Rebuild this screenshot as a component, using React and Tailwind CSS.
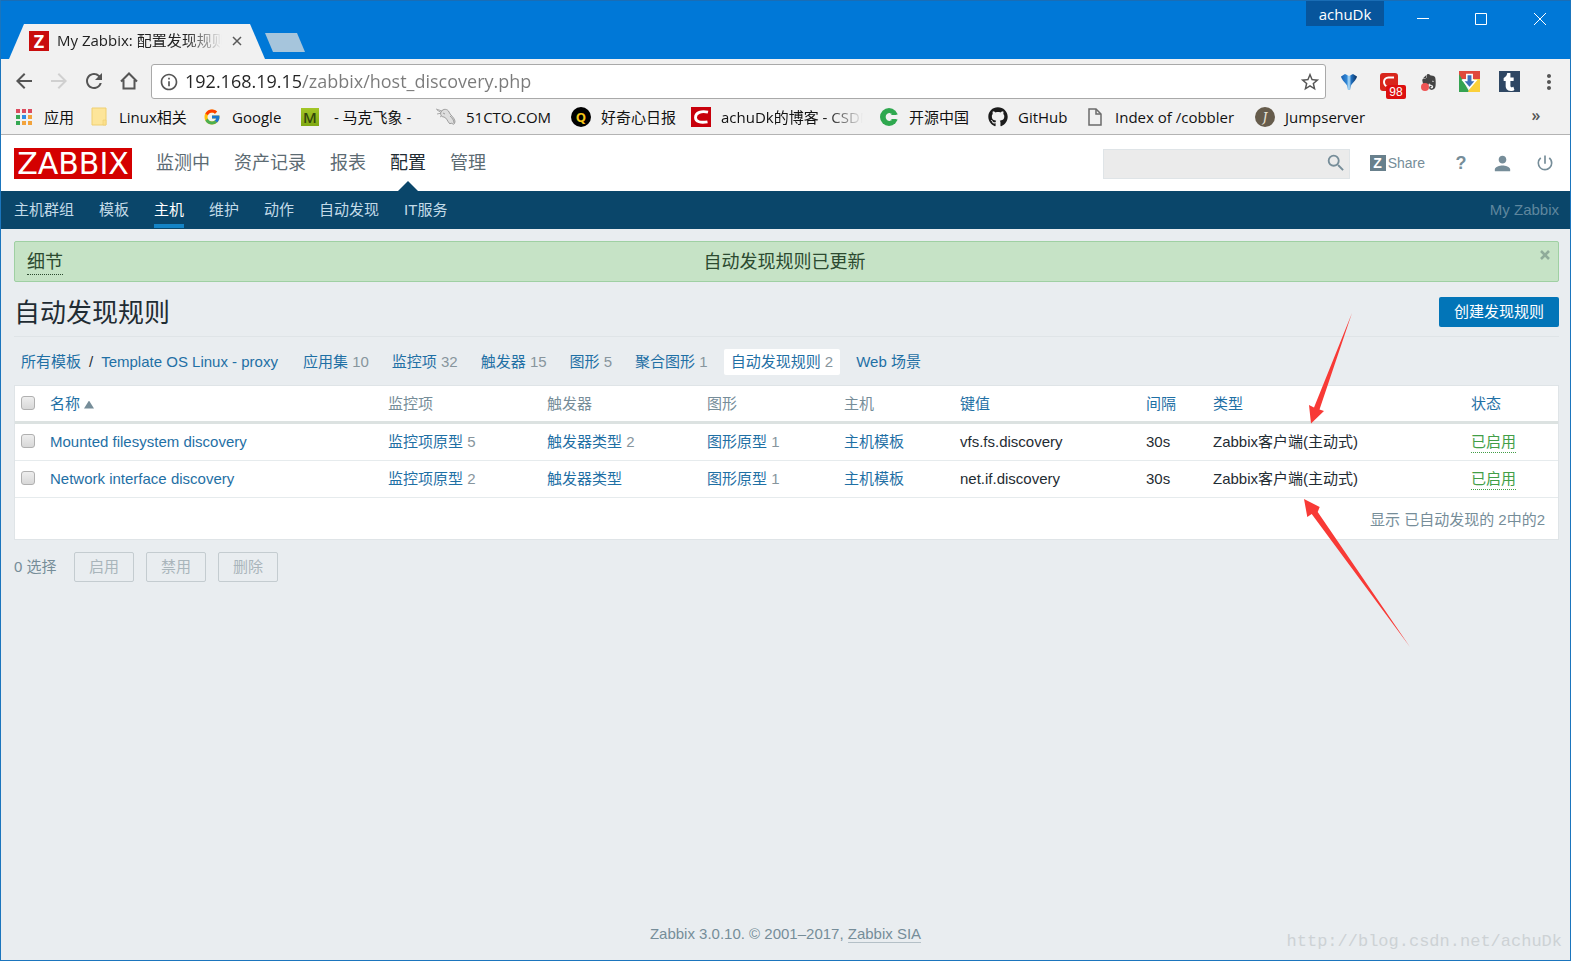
import React from 'react'
import { FaGithub, FaEvernote, FaTumblr } from 'react-icons/fa'
import { FcGoogle } from 'react-icons/fc'
import { MdArrowBack, MdArrowForward, MdRefresh, MdInfoOutline, MdStarBorder, MdMoreVert, MdSearch, MdPerson, MdPowerSettingsNew } from 'react-icons/md'

const appColors = ['#dc4b5e', '#dc4b5e', '#dc4b5e', '#35a853', '#2f8de4', '#f2a33c', '#35a853', '#f2a33c', '#f2a33c']

function AppsIcon() {
  return (
    <svg viewBox="0 0 18 18" className="w-[18px] h-[18px]">
      {appColors.map((fill, i) => (
        <rect key={i} x={1 + (i % 3) * 6} y={1 + Math.floor(i / 3) * 6} width="4" height="4" fill={fill} />
      ))}
    </svg>
  )
}

function FolderIcon() {
  return (
    <svg viewBox="0 0 20 20" className="w-5 h-5">
      <path d="M3 1h14v17H3z" fill="#fde59a" stroke="#efcf70" strokeWidth="1" />
      <path d="M14 13h3v5h-3z" fill="#fbe08c" stroke="#efcf70" strokeWidth=".6" />
    </svg>
  )
}

function SquidIcon() {
  return (
    <svg viewBox="0 0 20 20" className="w-5 h-5">
      <path d="M0 2l6 2M1 7l5-1M4 10l3-2M1 3l5 3" stroke="#aaa" strokeWidth="1" fill="none" />
      <path d="M5 5c2-4 7-3 8 0 1 3 5 5 6 9 0 2-1 4-2 3l-2-1-1 1c-3-3-3-6-6-7-3 0-4-3-3-5z" fill="#dedede" stroke="#8c8c8c" strokeWidth=".8" />
      <path d="M14 9c2 2 4 4 4 7M7 6l2 1" stroke="#8c8c8c" strokeWidth=".8" fill="none" />
    </svg>
  )
}

function PageIcon() {
  return (
    <svg viewBox="0 0 20 20" className="w-5 h-5" fill="none" stroke="#6b6b6b" strokeWidth="1.500">
      <path d="M4 2h7l5 5v11H4z" />
      <path d="M11 2v5h5" />
    </svg>
  )
}

function ChinaIcon() {
  return (
    <svg viewBox="0 0 20 20" className="w-5 h-5">
      <circle cx="10" cy="10" r="9" fill="#2fa84f" />
      <path d="M20 7.500h-6.200a4 4 0 1 0 0 5H20z" fill="#f1f1f1" />
      <path d="M11 6.500h5.500l1.500 1.500h-5zM11 13.500h5.500l1.500-1.500h-5z" fill="#2fa84f" />
    </svg>
  )
}

function CsdnIcon() {
  return (
    <svg viewBox="0 0 20 20" className="w-5 h-5">
      <rect width="20" height="20" fill="#c8000b" />
      <path d="M17 5.200C10.500 3.600 4.500 5.500 4.500 10.500c0 4.300 5 5.500 12 4.300" fill="none" stroke="#fff" strokeWidth="2.800" />
    </svg>
  )
}

const bookmarks = [
  { label: '应用', icon: <AppsIcon />, width: 'w-[75px]' },
  { label: 'Linux相关', icon: <FolderIcon />, width: 'w-[113px]' },
  { label: 'Google', icon: <FcGoogle className="w-[18px] h-[18px]" />, width: 'w-[98px]' },
  { label: '\u00a0- 马克飞象 -', icon: <span className="w-[18px] h-[18px] bg-linear-to-b from-[#a3c626] to-[#7fa812] text-[#33470a] font-semibold text-[15px] leading-[18px] text-center">M</span>, width: 'w-[136px]' },
  { label: '51CTO.COM', icon: <SquidIcon />, width: 'w-[135px]' },
  { label: '好奇心日报', icon: <span className="w-5 h-5 rounded-full bg-black text-[#f4c518] font-bold text-[13px] leading-5 text-center">Q</span>, width: 'w-[120px]' },
  { label: 'achuDk的博客 - CSDN', icon: <CsdnIcon />, width: 'w-[188px]', faded: true },
  { label: '开源中国', icon: <ChinaIcon />, width: 'w-[109px]' },
  { label: 'GitHub', icon: <FaGithub className="w-5 h-5 text-[#1b1b1b]" />, width: 'w-[97px]' },
  { label: 'Index of /cobbler', icon: <PageIcon />, width: 'w-[170px]' },
  { label: 'Jumpserver', icon: <span className="w-5 h-5 rounded-full bg-[#665c4c] text-[#e8e2d4] italic font-serif text-[15px] leading-5 text-center">J</span>, width: 'w-[120px]' },
]

function TitleBar() {
  return (
    <header className="h-[59px] flex items-end bg-[#0078d7] border-t border-[#1a6db5]">
      <div className="ml-2 w-64 h-[35px] pl-5 pb-[2px] flex items-center bg-[#f1f1f1] [clip-path:polygon(0_100%,15px_0,calc(100%-15px)_0,100%_100%)]">
        <span className="w-5 h-5 shrink-0 bg-[#c90d0d] text-white font-bold text-lg leading-5 text-center">Z</span>
        <span className="ml-2 w-[165px] overflow-hidden whitespace-nowrap text-[15px] text-[#222] [mask-image:linear-gradient(to_right,black_78%,transparent)]">My Zabbix: 配置发现规则</span>
        <button aria-label="关闭标签页" className="ml-[7px] w-4 h-4 flex items-center justify-center">
          <svg viewBox="0 0 10 10" className="w-[10px] h-[10px]" stroke="#5a5a5a" strokeWidth="1.500"><path d="M1 1l8 8M9 1l-8 8" /></svg>
        </button>
      </div>
      <button aria-label="新标签页" className="mb-[7px] w-10 h-[19px] bg-[#a6c5dc] [clip-path:polygon(0_0,32px_0,100%_100%,8px_100%)]" />
      <div className="ml-auto self-start flex items-start">
        <span className="w-[78px] h-[25px] bg-[#07559c] text-white text-[15px] leading-[26px] text-center">achuDk</span>
        <div className="ml-[10px] flex h-9 items-center text-white">
          <button aria-label="最小化" className="w-[58px] flex justify-center">
            <svg viewBox="0 0 12 12" className="w-3 h-3" stroke="currentColor"><path d="M0 5.500h12" /></svg>
          </button>
          <button aria-label="最大化" className="w-[58px] flex justify-center">
            <svg viewBox="0 0 12 12" className="w-3 h-3" stroke="currentColor" fill="none"><path d="M.5.500h11v11H.5z" /></svg>
          </button>
          <button aria-label="关闭" className="w-[60px] flex justify-center">
            <svg viewBox="0 0 12 12" className="w-3 h-3" stroke="currentColor"><path d="M0 0l12 12M12 0L0 12" /></svg>
          </button>
        </div>
      </div>
    </header>
  )
}

function Toolbar() {
  return (
    <div className="h-[41px] pt-1 pl-[11px] pr-[1px] flex items-center text-[#555]">
      <div className="w-[139px] pb-[2px] flex gap-[11px]">
        <button aria-label="后退"><MdArrowBack className="w-6 h-6" /></button>
        <button aria-label="前进" className="text-[#d0d0d0]"><MdArrowForward className="w-6 h-6" /></button>
        <button aria-label="重新加载"><MdRefresh className="w-6 h-6" /></button>
        <button aria-label="主页">
          <svg viewBox="0 0 24 24" className="w-6 h-6" fill="none" stroke="currentColor" strokeWidth="2"><path d="M4 12.500L12 4.500l8 8M6.500 11v8.500h11V11" /></svg>
        </button>
      </div>
      <div className="flex-1 h-[35px] pl-[7px] pr-1 flex items-center gap-[6px] bg-white border border-[#a9a9a9] rounded-[3px]">
        <MdInfoOutline className="w-5 h-5" />
        <input
          aria-label="地址"
          defaultValue="192.168.19.15/zabbix/host_discovery.php"
          className="flex-1 min-w-0 h-7 pb-[2px] outline-none text-lg text-transparent bg-clip-text bg-[linear-gradient(to_right,#222_117px,#7a7a7a_117px)]"
        />
        <button aria-label="收藏"><MdStarBorder className="w-[22px] h-[22px]" /></button>
      </div>
      <div className="ml-[3px] flex items-center">
        <button aria-label="扩展一" className="w-10 flex justify-center">
          <svg viewBox="0 0 20 20" className="w-5 h-5">
            <defs>
              <linearGradient id="fan" x1="0" y1="0" x2="1" y2="0">
                <stop offset="0" stopColor="#1b5fae" /><stop offset=".35" stopColor="#2f86d6" /><stop offset=".5" stopColor="#b4e0fa" /><stop offset=".65" stopColor="#1f6fbe" /><stop offset="1" stopColor="#0b2f5c" />
              </linearGradient>
            </defs>
            <path d="M2 4.500L6 2l4 2 4-2 4 2.500c-1 4-4 5.500-6 9L11 18H9l-1-4.500C6 10 3 8.500 2 4.500z" fill="url(#fan)" />
          </svg>
        </button>
        <button aria-label="扩展二" className="relative w-10 flex justify-center">
          <svg viewBox="0 0 20 20" className="w-5 h-5"><rect x="1" y="1" width="18" height="18" rx="3" fill="#d8261c" /><path d="M15 5.500H9.500a4 4 0 0 0 0 9H15" stroke="#fff" strokeWidth="2" fill="none" /></svg>
          <span className="absolute left-[17px] top-[13px] w-5 h-[14px] rounded-[2px] bg-[#dd1010] text-white text-xs leading-[14px] text-center font-['Liberation_Sans',sans-serif]">98</span>
        </button>
        <button aria-label="扩展三" className="relative w-10 flex justify-center">
          <FaEvernote className="w-[18px] h-[18px] text-[#444]" />
          <span className="absolute left-3 bottom-0 w-2 h-2 rounded-full bg-[#ee5555]" />
        </button>
        <button aria-label="扩展四" className="w-10 flex justify-center">
          <svg viewBox="0 0 21 21" className="w-[21px] h-[21px]">
            <path d="M0 0h21v8H0z" fill="#e0493c" /><path d="M0 3l10.500 18H0z" fill="#35a352" /><path d="M21 8v13H9l6-13z" fill="#fbd03a" />
            <path d="M7.800 3.500h5.400v6H17l-6.500 7.500L4 9.500h3.800z" fill="#3c6fb8" stroke="#fff" strokeWidth="1.500" />
          </svg>
        </button>
        <button aria-label="扩展五" className="w-10 flex justify-center">
          <span className="w-[21px] h-[21px] flex items-center justify-center bg-[#2f4763] text-white"><FaTumblr className="w-[18px] h-[18px]" /></span>
        </button>
        <button aria-label="菜单" className="w-10 flex justify-center"><MdMoreVert className="w-6 h-6" /></button>
      </div>
    </div>
  )
}

function Bookmarks() {
  return (
    <nav className="h-[35px] pl-[13px] pr-6 flex items-center border-b border-[#b3b3b3] text-[15px] text-[#111]">
      {bookmarks.map(({ label, icon, width, faded }) => (
        <a key={label} href="#" className={`${width} shrink-0 flex items-center gap-[10px] whitespace-nowrap`}>
          <span className="w-5 shrink-0 flex justify-center">{icon}</span>
          {faded
            ? <span className="w-[142px] overflow-hidden [mask-image:linear-gradient(to_right,black_75%,transparent)]">{label}</span>
            : <span>{label}</span>}
        </a>
      ))}
      <button aria-label="更多书签" className="ml-auto w-5 pb-1 font-semibold text-base leading-5 text-[#555]">»</button>
    </nav>
  )
}

const mainMenu = ['监测中', '资产记录', '报表', '配置', '管理']
const subMenu = ['主机群组', '模板', '主机', '维护', '动作', '自动发现', 'IT服务']

function ZabbixHeader() {
  return (
    <header>
      <div className="h-14 pl-[13px] pr-[15px] flex items-center bg-white text-[#768d99]">
        <a href="#" className="w-[118px] h-[31px] bg-[#d40000] text-white text-center text-[30px] leading-[31px] font-['DejaVu_Sans',sans-serif]">ZABBIX</a>
        <nav className="ml-6 h-14 flex gap-6 text-lg leading-[56px] text-[#5c6b73]">
          {mainMenu.map(item => (
            <a key={item} href="#" className={item === '配置' ? 'relative text-[#1f2c33]' : ''}>
              {item}
              {item === '配置' && <span className="absolute bottom-0 left-2 w-5 h-[10px] bg-[#0a466a] [clip-path:polygon(50%_0,100%_100%,0_100%)]" />}
            </a>
          ))}
        </nav>
        <form className="ml-auto mt-[2px] w-[247px] h-[30px] pr-[2px] flex items-center bg-[#ebebeb] border border-[#dfe4e7]" onSubmit={e => e.preventDefault()}>
          <input type="text" aria-label="搜索" className="flex-1 min-w-0 px-2 outline-none bg-transparent" />
          <button aria-label="搜索" className="pb-[2px]"><MdSearch className="w-[22px] h-[22px]" /></button>
        </form>
        <a href="#" className="ml-5 flex items-center gap-[2px] text-sm">
          <span className="w-4 h-4 bg-[#68808c] text-white font-bold text-sm leading-4 text-center">Z</span>
          Share
        </a>
        <a href="#" aria-label="帮助" className="ml-[26px] w-5 text-center font-bold text-lg leading-5">?</a>
        <a href="#" aria-label="用户" className="ml-5"><MdPerson className="w-[23px] h-[23px]" /></a>
        <a href="#" aria-label="退出" className="ml-[21px]"><MdPowerSettingsNew className="w-5 h-5" /></a>
      </div>
      <div className="h-[38px] pl-[13px] pr-[11px] flex items-start justify-between bg-[#0a466a] text-[#c3dbe8]">
        <nav className="flex gap-[25px] leading-[38px]">
          {subMenu.map(item => (
            <a key={item} href="#" className={item === '主机' ? 'h-[37px] text-white border-b-4 border-[#1484c6]' : ''}>{item}</a>
          ))}
        </nav>
        <span className="leading-[38px] text-[#5f879e]">My Zabbix</span>
      </div>
    </header>
  )
}

const tabs = [
  { label: '应用集', count: 10 },
  { label: '监控项', count: 32 },
  { label: '触发器', count: 15 },
  { label: '图形', count: 5 },
  { label: '聚合图形', count: 1 },
  { label: '自动发现规则', count: 2, active: true },
  { label: 'Web 场景' },
]

const rules = [
  { name: 'Mounted filesystem discovery', items: 5, triggers: 2, graphs: 1, key: 'vfs.fs.discovery' },
  { name: 'Network interface discovery', items: 2, graphs: 1, key: 'net.if.discovery' },
]

const checkboxClass = 'block mb-[2px] appearance-none w-[14px] h-[14px] rounded-[3px] border border-[#b0b0b0] bg-linear-to-b from-[#eee] to-[#d8d8d8]'

function CountLink({ label, count }) {
  return (
    <>
      <a href="#" className="text-[#1f70a5]">{label}</a>
      {count && <span className="text-[#87959d]"> {count}</span>}
    </>
  )
}

function RulesTable() {
  return (
    <div className="relative">
      <table className="w-full table-fixed border border-[#dfe4e7] border-separate border-spacing-0 bg-white text-left leading-5 [&_td]:px-[6px] [&_th]:px-[6px] [&_th]:font-normal [&_th]:border-b-3 [&_th]:border-[#dce2e1] [&_tbody_td]:border-b [&_tbody_td]:border-[#e6ebed]">
        <colgroup>
          <col className="w-[29px]" />
          <col />
          <col className="w-[159px]" />
          <col className="w-[160px]" />
          <col className="w-[137px]" />
          <col className="w-[116px]" />
          <col className="w-[186px]" />
          <col className="w-[67px]" />
          <col className="w-[258px]" />
          <col className="w-[93px]" />
        </colgroup>
        <thead>
          <tr className="h-[38px] text-[#768d99]">
            <th><input type="checkbox" aria-label="全选" className={checkboxClass} /></th>
            <th>
              <a href="#" className="text-[#1f70a5]">名称</a>
              <span className="inline-block ml-1 w-[10px] h-2 bg-[#768d99] [clip-path:polygon(50%_0,100%_100%,0_100%)]" />
            </th>
            <th>监控项</th>
            <th>触发器</th>
            <th>图形</th>
            <th>主机</th>
            <th><a href="#" className="text-[#1f70a5]">键值</a></th>
            <th><a href="#" className="text-[#1f70a5]">间隔</a></th>
            <th><a href="#" className="text-[#1f70a5]">类型</a></th>
            <th><a href="#" className="text-[#1f70a5]">状态</a></th>
          </tr>
        </thead>
        <tbody>
          {rules.map(rule => (
            <tr key={rule.name} className="h-[37px]">
              <td><input type="checkbox" aria-label={rule.name} className={checkboxClass} /></td>
              <td><a href="#" className="text-[#1f70a5]">{rule.name}</a></td>
              <td><CountLink label="监控项原型" count={rule.items} /></td>
              <td><CountLink label="触发器类型" count={rule.triggers} /></td>
              <td><CountLink label="图形原型" count={rule.graphs} /></td>
              <td><CountLink label="主机模板" /></td>
              <td>{rule.key}</td>
              <td>30s</td>
              <td>Zabbix客户端(主动式)</td>
              <td><a href="#" className="inline-block text-[#429e47] border-b border-dotted border-[#429e47]">已启用</a></td>
            </tr>
          ))}
        </tbody>
        <tfoot>
          <tr className="h-[41px] text-right text-[#768d99]">
            <td colSpan={10} className="pt-[2px]"><span className="pr-[7px]">显示 已自动发现的 2中的2</span></td>
          </tr>
        </tfoot>
      </table>
      {/* hand-drawn arrows pointing at the type column */}
      <svg viewBox="1300 310 112 340" className="absolute right-[147px] -top-[75px] w-[112px] h-[340px] pointer-events-none" fill="#f83a36">
        <path d="M1352 313L1319.500 409.500L1324 411L1311 423.500L1309 405L1314 407.500z" />
        <path d="M1304 499L1319.700 507L1317.700 512L1410 647L1311.700 514L1307.300 517z" />
      </svg>
    </div>
  )
}

export default function App() {
  return (
    <div className="relative min-h-screen flex flex-col bg-[#e9edf0] border-x border-b border-[#1b75bd] text-[15px] text-[#1f2c33] font-['Liberation_Sans','Noto_Sans_CJK_SC',sans-serif]">
      <div className="bg-[#f1f1f1] font-['Open_Sans','Noto_Sans_CJK_SC',sans-serif]">
        <TitleBar />
        <Toolbar />
        <Bookmarks />
      </div>
      <ZabbixHeader />
      <main className="flex-1 px-[13px] pt-3 pr-[11px]">
        <div className="h-[41px] pl-3 pr-4 grid grid-cols-[1fr_auto_1fr] items-center bg-[#c6e3c6] border border-[#9fd0a3] rounded-[2px] text-lg text-[#2c4a30]">
          <div><button className="leading-6 border-b border-dotted border-[#2c4a30]">细节</button></div>
          <span className="leading-6">自动发现规则已更新</span>
          <button aria-label="关闭" className="-mr-2 justify-self-end self-start mt-2">
            <svg viewBox="0 0 10 10" className="w-[10px] h-[10px]" stroke="#8fab9a" strokeWidth="2.600"><path d="M1 1l8 8M9 1l-8 8" /></svg>
          </button>
        </div>
        <div className="h-[55px] pt-[15px] flex items-start justify-between border-b border-[#dfe4e7]">
          <h1 className="text-[26px] leading-8">自动发现规则</h1>
          <button className="w-[120px] h-[30px] rounded-[2px] bg-[#0275b8] text-white">创建发现规则</button>
        </div>
        <nav className="h-12 pt-[2px] pl-[7px] flex items-center leading-[26px]">
          <a href="#" className="text-[#1f70a5]">所有模板</a>
          <span className="px-2">/</span>
          <a href="#" className="text-[#1f70a5]">Template OS Linux - proxy</a>
          <div className="ml-[18px] flex gap-[9px]">
            {tabs.map(({ label, count, active }) => (
              <span key={label} className={`px-[7px] ${active ? 'bg-white rounded-[2px]' : ''}`}>
                <CountLink label={label} count={count} />
              </span>
            ))}
          </div>
        </nav>
        <RulesTable />
        <div className="mt-3 flex items-center gap-3 text-[#768d99]">
          <span className="w-12 leading-[30px]">0 选择</span>
          <button disabled className="w-[60px] h-[30px] rounded-[2px] border border-[#c4ccd0] text-[#a9b5bb]">启用</button>
          <button disabled className="w-[60px] h-[30px] rounded-[2px] border border-[#c4ccd0] text-[#a9b5bb]">禁用</button>
          <button disabled className="w-[60px] h-[30px] rounded-[2px] border border-[#c4ccd0] text-[#a9b5bb]">删除</button>
        </div>
      </main>
      <footer className="pb-4 text-center leading-5 text-[#768d99]">
        Zabbix 3.0.10. © 2001–2017, <a href="#" className="border-b border-[#b4c0c7]">Zabbix SIA</a>
      </footer>
      <span className="absolute right-2 bottom-[6px] text-[17px] leading-6 text-[#cdd2d5] font-['Liberation_Mono',monospace]">http://blog.csdn.net/achuDk</span>
    </div>
  )
}
